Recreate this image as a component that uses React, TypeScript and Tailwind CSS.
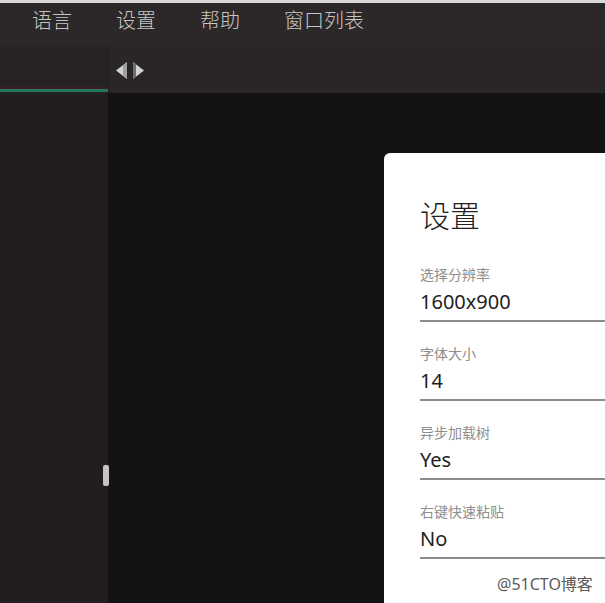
import React from 'react';

const fields = [
  { label: '选择分辨率', value: '1600x900' },
  { label: '字体大小', value: '14' },
  { label: '异步加载树', value: 'Yes' },
  { label: '右键快速粘贴', value: 'No' },
];

function Field({ label, value }: { label: string; value: string }) {
  return (
    <div className="mb-[22px] border-b-2 border-[#8c8c8c] pb-[4px]">
      <div className="text-[14px] leading-[20px] text-[#8e8e8e]">{label}</div>
      <div className="mt-[3px] text-[20px] leading-[28px] text-[#1e1e1e]">{value}</div>
    </div>
  );
}

export default function App() {
  return (
    <div
      className="relative flex h-[603px] w-[605px] flex-col overflow-hidden bg-[#141213]"
      style={{ fontFamily: '"Noto Sans", "Noto Sans CJK SC", sans-serif' }}
    >
      <div className="h-[3px] bg-[#d9d9d9]" />
      <div className="flex h-[44px] items-start gap-[44px] bg-[#2c2829] pl-[32px] pt-[4px] text-[20px] font-light leading-[28px] text-[#c6c6c6]">
        <span>语言</span>
        <span>设置</span>
        <span>帮助</span>
        <span>窗口列表</span>
      </div>

      <div className="flex flex-1">
        {/* sidebar */}
        <div className="flex w-[108px] flex-col">
          <div className="flex h-[46px] flex-col justify-end bg-[#272324]">
            <div className="h-[2px] bg-[#3e1f26]" />
            <div className="mb-[1px] h-[3px] bg-[#23775c]" />
          </div>
          <div className="relative flex-1 bg-[#221e1f]">
            <div className="absolute right-[-1px] top-[372px] h-[21px] w-[6px] rounded-[2px] bg-[#c4c4c4]" />
          </div>
        </div>

        {/* main */}
        <div className="flex flex-1 flex-col">
          <div className="flex h-[46px] items-center border-l border-[#1e1b1c] bg-[#2a2627] pl-[7px]">
            <svg width="29" height="17" viewBox="0 0 29 17">
              <polygon points="0,8.5 11,0 11,17" fill="#d2d2d2" />
              <polygon points="7,3.5 11,0 11,17 7,13.5" fill="#a0a0a0" />
              <polygon points="17,0 28,8.5 17,17" fill="#d2d2d2" />
              <polygon points="17,0 20,2.5 20,14.5 17,17" fill="#66706f" />
            </svg>
          </div>
          <div className="flex flex-1 pl-[276px] pt-[60px]">
            <div className="flex-1 rounded-tl-[6px] bg-white pl-[36px] pt-[45px]">
              <div className="mb-[31px] text-[30px] font-light leading-[36px] text-[#222]">设置</div>
              {fields.map((f) => (
                <Field key={f.label} label={f.label} value={f.value} />
              ))}
            </div>
          </div>
        </div>
      </div>

      <div className="absolute left-[497px] top-[574px] text-[16px] leading-[20px] text-[#5a5a5a]">@51CTO博客</div>
    </div>
  );
}
